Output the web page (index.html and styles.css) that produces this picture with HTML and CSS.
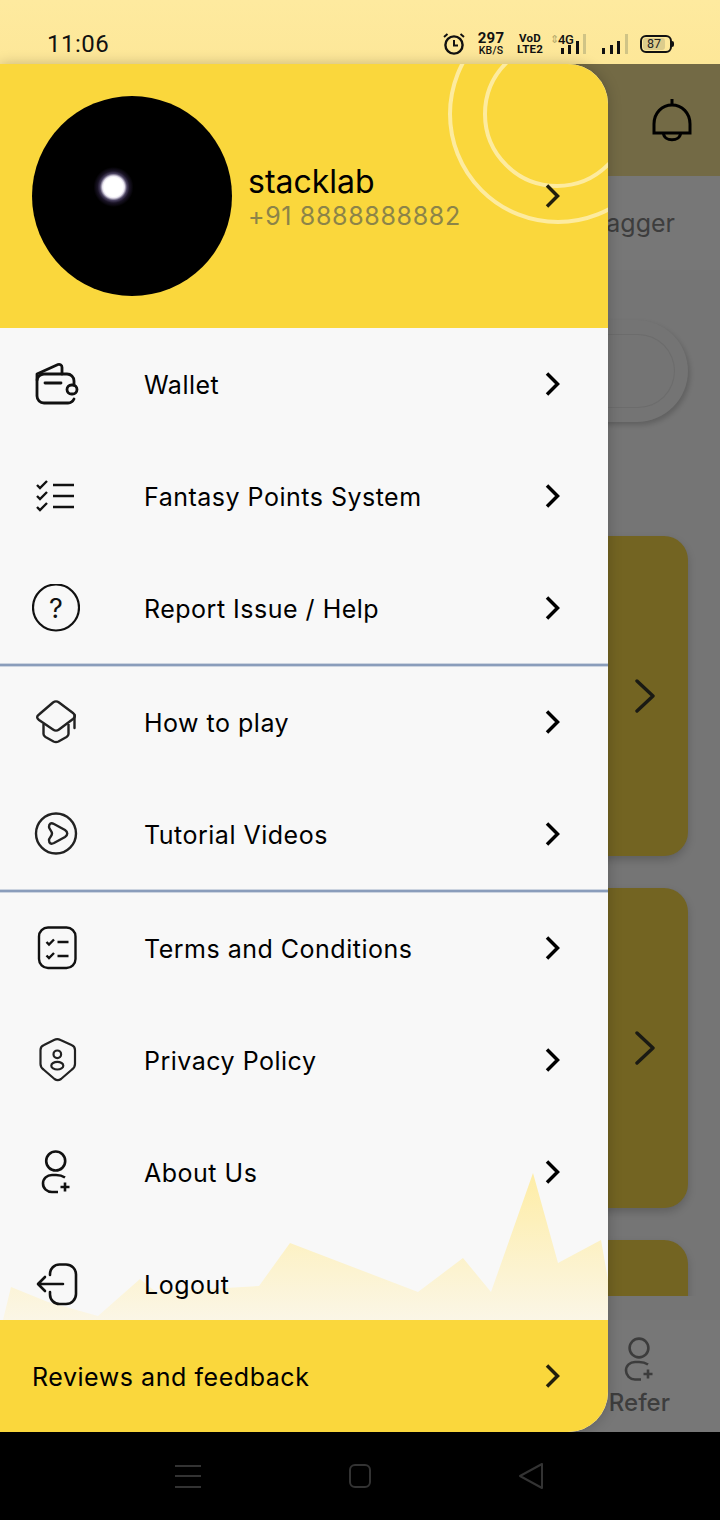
FILE: index.html
```html
<!DOCTYPE html>
<html lang="en">
<head>
    <meta charset="UTF-8">
    <meta name="viewport" content="width=device-width, initial-scale=1.0">
    <title>Drawer Menu</title>
    <link rel="stylesheet" href="styles.css">
</head>
<body>
<div class="screen">

    <div class="status-bar">
        <span class="clock">11:06</span>
        <div class="status-icons">
            <svg class="alarm" width="24" height="24" viewBox="0 0 24 24" fill="none" stroke="#111" stroke-width="2.4">
                <circle cx="12" cy="13" r="8.6"/>
                <path d="M12 8v5.5h4" stroke-width="2"/>
                <path d="M2 5l3.5-3M22 5l-3.5-3" stroke-width="2"/>
            </svg>
            <div class="speed"><b>297</b><span>KB/S</span></div>
            <div class="volte"><b>VoD</b><b>LTE2</b></div>
            <div class="net">
                <span class="net-arrows">⇕</span>
                <span class="net-type">4G</span>
                <svg width="30" height="20" viewBox="0 0 30 20" fill="#111">
                    <rect x="1" y="14" width="3" height="6"/>
                    <rect x="8" y="11" width="3" height="9"/>
                    <rect x="16" y="7" width="3" height="13"/>
                    <rect x="23" y="0" width="3" height="20" fill="#d0c486"/>
                </svg>
            </div>
            <svg class="signal" width="28" height="20" viewBox="0 0 28 20" fill="#111">
                <rect x="1" y="14" width="3" height="6"/>
                <rect x="9" y="11" width="3" height="9"/>
                <rect x="16" y="7" width="3" height="13"/>
                <rect x="24" y="0" width="3" height="20" fill="#d0c486"/>
            </svg>
            <div class="battery"><span class="battery-level">87</span></div>
        </div>
    </div>

    <!-- page behind the drawer -->
    <div class="page">
        <div class="top-bar">
            <svg width="48" height="48" viewBox="0 0 48 48" fill="none" stroke="#000" stroke-width="3">
                <path d="M24 3v6"/>
                <path d="M6 37V28C6 17 14 9 24 9s18 8 18 19v9z"/>
                <path d="M15.5 37c0 9 17 9 17 0"/>
            </svg>
        </div>
        <div class="tabs"><span>agger</span></div>
        <div class="content">
            <div class="pill"><div class="pill-inner"></div></div>
            <div class="card">
                <svg width="20" height="34" viewBox="0 0 20 34" fill="none" stroke="#1a1a14" stroke-width="3.4" stroke-linecap="round" stroke-linejoin="round"><path d="M2 2l16 15L2 32"/></svg>
            </div>
            <div class="card">
                <svg width="20" height="34" viewBox="0 0 20 34" fill="none" stroke="#1a1a14" stroke-width="3.4" stroke-linecap="round" stroke-linejoin="round"><path d="M2 2l16 15L2 32"/></svg>
            </div>
            <div class="card"></div>
        </div>
        <div class="bottom-bar">
            <div class="refer">
                <svg width="48" height="46" viewBox="0 0 48 46" fill="none" stroke="#3c3c3c" stroke-width="2.6">
                    <circle cx="24" cy="12" r="9.4"/>
                    <path d="M33 28.5c-3-2-5-2.500-9-2.500h-4c-5 0-9 3.500-9 8.500s4 9 9 9h6"/>
                    <path d="M33 33.500v9M28.500 38h9"/>
                </svg>
                <span>Refer</span>
            </div>
        </div>
    </div>

    <div class="nav-bar">
        <svg width="26" height="24" viewBox="0 0 26 24" stroke="#333" stroke-width="2"><path d="M0 2h26M0 12h26M0 23h26"/></svg>
        <svg width="22" height="24" viewBox="0 0 22 24" fill="none" stroke="#333" stroke-width="2"><rect x="1" y="1" width="20" height="22" rx="5"/></svg>
        <svg width="24" height="26" viewBox="0 0 24 26" fill="none" stroke="#333" stroke-width="2" stroke-linejoin="round"><path d="M23 1v24L1 13z"/></svg>
    </div>

    <!-- drawer -->
    <aside class="drawer">
        <div class="profile">
            <div class="ring ring-outer"></div>
            <div class="ring ring-inner"></div>
            <div class="avatar"></div>
            <div class="profile-info">
                <div class="profile-name">stacklab</div>
                <div class="profile-phone">+91 8888888882</div>
            </div>
            <svg class="chevron" width="18" height="26" viewBox="0 0 18 26" fill="none" stroke="#221f0c" stroke-width="3.5"><path d="M3 2.500L13.500 13 3 23.500"/></svg>
        </div>

        <div class="menu">
            <svg class="menu-bg" width="608" height="160" viewBox="0 0 608 160">
                <defs>
                    <linearGradient id="chartFill" x1="0" y1="0" x2="0" y2="1">
                        <stop offset="0" stop-color="#feeda6"/>
                        <stop offset="1" stop-color="#fbf6e6"/>
                    </linearGradient>
                </defs>
                <path fill="url(#chartFill)" d="M3 160L11 127L48 142L98 156L140 119L156 132L259 126L290 83L418 132L463 98L491 132L533 13L558 103L601 80L608 120V160z"/>
            </svg>

            <a class="row">
                <svg class="icon" width="48" height="48" viewBox="0 0 48 48" fill="none" stroke="#111" stroke-width="2.800" stroke-linecap="round" stroke-linejoin="round">
                    <path d="M42 25v-4a7 7 0 0 0-7-7H12a7 7 0 0 0-7 7v15a7 7 0 0 0 7 7h24a7 7 0 0 0 6-4"/>
                    <path d="M5 20v-6l21-9.500c2-.5 4 .5 4 3V14"/>
                    <path d="M13 23h16"/>
                    <rect x="35" y="25" width="10" height="9" rx="4.500"/>
                </svg>
                <span>Wallet</span>
                <svg class="chevron" width="18" height="26" viewBox="0 0 18 26" fill="none" stroke="#000" stroke-width="3.5"><path d="M3 2.500L13.500 13 3 23.500"/></svg>
            </a>
            <a class="row">
                <svg class="icon" width="48" height="48" viewBox="0 0 48 48" fill="none" stroke="#111" stroke-width="2.400">
                    <path d="M5 13l3 3 7-7M5 24l3 3 7-7M5 35l3 3 7-7"/>
                    <path d="M21 13h21M21 24h21M21 35h21"/>
                </svg>
                <span>Fantasy Points System</span>
                <svg class="chevron" width="18" height="26" viewBox="0 0 18 26" fill="none" stroke="#000" stroke-width="3.5"><path d="M3 2.500L13.500 13 3 23.500"/></svg>
            </a>
            <a class="row">
                <svg class="icon" width="48" height="48" viewBox="0 0 48 48" fill="none" stroke="#111" stroke-width="2.200">
                    <circle cx="24" cy="23.500" r="23"/>
                    <text class="icon-mark" x="24" y="33.500" text-anchor="middle" fill="#111" stroke="none">?</text>
                </svg>
                <span>Report Issue / Help</span>
                <svg class="chevron" width="18" height="26" viewBox="0 0 18 26" fill="none" stroke="#000" stroke-width="3.5"><path d="M3 2.500L13.500 13 3 23.500"/></svg>
            </a>

            <div class="divider"></div>

            <a class="row">
                <svg class="icon" width="48" height="48" viewBox="0 0 48 48" fill="none" stroke="#222" stroke-width="2.400" stroke-linejoin="round">
                    <path d="M21 4.500c2-1.500 4-1.500 6 0L41 15c2.500 2 2.500 4 0 6L27 31.500c-2 1.500-4 1.500-6 0L7 22c-2.500-2-2.500-3.500 0-5.500z"/>
                    <path d="M11.500 26v10c0 1.500.5 2 2 3l8 4.500c1.500.7 3.500.7 5 0l8-4.500c1.500-1 2-1.500 2-3V26"/>
                    <path d="M42.500 17v13" stroke-linecap="round"/>
                </svg>
                <span>How to play</span>
                <svg class="chevron" width="18" height="26" viewBox="0 0 18 26" fill="none" stroke="#000" stroke-width="3.5"><path d="M3 2.500L13.500 13 3 23.500"/></svg>
            </a>
            <a class="row">
                <svg class="icon" width="48" height="48" viewBox="0 0 48 48" fill="none" stroke="#222" stroke-width="2.400">
                    <circle cx="24" cy="23.500" r="20"/>
                    <path d="M17 17c0-3.500 2-4.500 5-3l11 6c3 2 3 5 0 7l-11 6c-3 1.500-5 .5-5-3 0-2 3-4 3-6.500S17 19 17 17z"/>
                </svg>
                <span>Tutorial Videos</span>
                <svg class="chevron" width="18" height="26" viewBox="0 0 18 26" fill="none" stroke="#000" stroke-width="3.5"><path d="M3 2.500L13.500 13 3 23.500"/></svg>
            </a>

            <div class="divider"></div>

            <a class="row">
                <svg class="icon" width="48" height="48" viewBox="0 0 48 48" fill="none" stroke="#111" stroke-width="2.400">
                    <rect x="7" y="3.500" width="36.500" height="40.500" rx="9"/>
                    <path d="M14.500 18l2.500 2.500 5-5M14.500 31.500l2.500 2.500 5-5"/>
                    <path d="M25.500 18h11M25.500 32h11"/>
                </svg>
                <span>Terms and Conditions</span>
                <svg class="chevron" width="18" height="26" viewBox="0 0 18 26" fill="none" stroke="#000" stroke-width="3.5"><path d="M3 2.500L13.500 13 3 23.500"/></svg>
            </a>
            <a class="row">
                <svg class="icon" width="48" height="48" viewBox="0 0 48 48" fill="none" stroke="#222" stroke-width="2.200" stroke-linejoin="round">
                    <path d="M22 4c2-1 4.500-1 6.500 0l11 5c2.500 1 3.500 2.500 3.500 5v14c0 2.500-1 4-3 5.500l-11 9.500c-2 1.500-4.500 1.500-6.500 0l-11-9.500c-2-1.500-3-3-3-5.500V14c0-2.500 1-4 3.500-5z"/>
                    <circle cx="25.300" cy="18.300" r="3.800"/>
                    <ellipse cx="25.300" cy="29.700" rx="6" ry="3.800"/>
                </svg>
                <span>Privacy Policy</span>
                <svg class="chevron" width="18" height="26" viewBox="0 0 18 26" fill="none" stroke="#000" stroke-width="3.5"><path d="M3 2.500L13.500 13 3 23.500"/></svg>
            </a>
            <a class="row">
                <svg class="icon" width="48" height="48" viewBox="0 0 48 48" fill="none" stroke="#111" stroke-width="2.600">
                    <circle cx="23.700" cy="13" r="9.500"/>
                    <path d="M33 29.500c-3-2-5-2.500-9-2.500h-4c-5 0-9 3.500-9 8.500s4 8.500 9 8.500h6"/>
                    <path d="M33 34.500v9M28.500 39h9"/>
                </svg>
                <span>About Us</span>
                <svg class="chevron" width="18" height="26" viewBox="0 0 18 26" fill="none" stroke="#000" stroke-width="3.5"><path d="M3 2.500L13.500 13 3 23.500"/></svg>
            </a>
            <a class="row">
                <svg class="icon" width="48" height="48" viewBox="0 0 48 48" fill="none" stroke="#111" stroke-width="2.600" stroke-linecap="round" stroke-linejoin="round">
                    <path d="M18 15v-1a9.500 9.500 0 0 1 9.500-9.500H34A10 10 0 0 1 44 14.500V34a10 10 0 0 1-10 10h-6.500A9.500 9.500 0 0 1 18 34.500V32"/>
                    <path d="M31 24H7M13 17l-7 7 7 7"/>
                </svg>
                <span>Logout</span>
            </a>
        </div>

        <a class="feedback">
            <span>Reviews and feedback</span>
            <svg class="chevron" width="18" height="26" viewBox="0 0 18 26" fill="none" stroke="#221f0c" stroke-width="3.5"><path d="M3 2.500L13.500 13 3 23.500"/></svg>
        </a>
    </aside>

</div>
</body>
</html>
```

FILE: styles.css
```css
* {
    box-sizing: border-box;
}
body {
    margin: 0;
    background-color: #000;
    font-family: 'Inter', sans-serif;
    color: #000;
}
.screen {
    position: relative;
    width: 720px;
    height: 1520px;
    overflow: hidden;
    display: flex;
    flex-direction: column;
}

/* status bar */
.status-bar {
    height: 64px;
    flex-shrink: 0;
    background: linear-gradient(#feea9f, #fde798);
    display: flex;
    align-items: flex-end;
    justify-content: space-between;
    padding: 0 48px 8px 47px;
    color: #111;
    font-family: 'Roboto', sans-serif;
}
.clock {
    font-size: 24px;
    line-height: 24px;
    letter-spacing: 0.5px;
}
.status-icons {
    display: flex;
    align-items: center;
    height: 24px;
}
.alarm {
    margin-right: 11px;
}
.speed {
    display: flex;
    flex-direction: column;
    align-items: center;
    width: 28px;
    margin-right: 12px;
}
.speed b {
    font-size: 15px;
    line-height: 13px;
    letter-spacing: 0.3px;
}
.speed span {
    font-size: 10.500px;
    line-height: 11px;
    font-weight: 500;
    letter-spacing: 0.2px;
}
.volte {
    display: flex;
    flex-direction: column;
    width: 26px;
    margin-right: 10px;
    align-items: center;
}
.volte b {
    font-size: 11.500px;
    line-height: 11px;
    letter-spacing: 0.2px;
}
.net {
    position: relative;
    display: flex;
    align-items: flex-end;
    width: 36px;
    height: 20px;
    justify-content: flex-end;
    margin-right: 12px;
}
.net-arrows {
    position: absolute;
    left: -3px;
    top: -1px;
    font-size: 11px;
    color: #b5a96c;
}
.net-type {
    position: absolute;
    left: 5px;
    top: 0;
    font-size: 13px;
    line-height: 12px;
    font-weight: 500;
    letter-spacing: -0.3px;
}
.net svg {
    margin-right: -1px;
}
.signal {
    margin-right: 11px;
}
.battery {
    position: relative;
    width: 32px;
    height: 18px;
    border: 2px solid #111;
    border-radius: 6px;
    padding: 1px;
    display: flex;
}
.battery::after {
    content: "";
    position: absolute;
    right: -4px;
    top: 4px;
    width: 2px;
    height: 6px;
    background-color: #111;
    border-radius: 0 2px 2px 0;
}
.battery-level {
    width: 85%;
    background-color: #dccc8c;
    border-radius: 3px;
    font-size: 12.500px;
    line-height: 12px;
    text-align: center;
    color: #222;
}

/* page behind the drawer */
.page {
    flex: 1;
    min-height: 0;
    display: flex;
    flex-direction: column;
    background-color: #757575;
}
.top-bar {
    height: 112px;
    flex-shrink: 0;
    background-color: #736a45;
    display: flex;
    justify-content: flex-end;
    align-items: center;
    padding: 0 24px 0 0;
}
.tabs {
    height: 94px;
    flex-shrink: 0;
    background-color: #777777;
    display: flex;
    justify-content: flex-end;
    align-items: center;
    padding-right: 45px;
    font-size: 25px;
    color: #3d3d3d;
}
.content {
    flex: 1;
    min-height: 0;
    margin-bottom: 24px;
    overflow: hidden;
    padding: 50px 32px 0;
    display: flex;
    flex-direction: column;
    gap: 32px;
}
.pill {
    height: 102px;
    flex-shrink: 0;
    margin-bottom: 82px;
    padding: 14px 13px 14px 0;
    border-radius: 51px;
    background-color: #747474;
    box-shadow: 2px 3px 5px rgba(0, 0, 0, 0.18);
}
.pill-inner {
    height: 100%;
    border-radius: 37px;
    background-color: #747474;
    border: 1px solid #6c6c6c;
    border-left: none;
}
.card {
    height: 320px;
    flex-shrink: 0;
    border-radius: 24px;
    background-color: #736422;
    box-shadow: 0 4px 8px rgba(0, 0, 0, 0.18);
    display: flex;
    align-items: center;
    justify-content: flex-end;
    padding-right: 33px;
}
.bottom-bar {
    height: 112px;
    flex-shrink: 0;
    background-color: #777777;
    display: flex;
    justify-content: flex-end;
    padding-right: 50px;
}
.refer {
    display: flex;
    flex-direction: column;
    align-items: center;
    padding-top: 16px;
    font-size: 24px;
    line-height: 30px;
    font-weight: 500;
    color: #3d3d3d;
}
.refer span {
    margin-top: 6px;
}
.nav-bar {
    height: 88px;
    flex-shrink: 0;
    background-color: #000;
    display: flex;
    justify-content: center;
    align-items: center;
    gap: 148px;
    padding-right: 3px;
}

/* drawer */
.drawer {
    position: absolute;
    left: 0;
    top: 64px;
    width: 608px;
    height: 1368px;
    overflow: hidden;
    border-radius: 0 40px 40px 0;
    background-color: #f8f8f8;
    display: flex;
    flex-direction: column;
    box-shadow: 0 0 14px rgba(0, 0, 0, 0.22);
}
.profile {
    position: relative;
    height: 264px;
    flex-shrink: 0;
    overflow: hidden;
    background-color: #fad73c;
    display: flex;
    align-items: center;
    padding: 0 46px 0 32px;
    gap: 16px;
}
.ring {
    position: absolute;
    border: 4px solid #fdeb9f;
    border-radius: 50%;
}
.ring-outer {
    left: 448px;
    top: -60px;
    width: 220px;
    height: 220px;
}
.ring-inner {
    left: 483px;
    top: -24px;
    width: 148px;
    height: 148px;
}
.avatar {
    width: 200px;
    height: 200px;
    flex-shrink: 0;
    border-radius: 50%;
    background: radial-gradient(circle at 81.5px 91px, #fff 0, #fff 9.5px, #e6e2ee 11px, #4a4260 13.5px, #1a1426 16px, #000 20px);
}
.profile-info {
    position: relative;
    flex: 1;
    padding-top: 4px;
}
.profile-name {
    font-size: 32px;
    line-height: 36px;
    margin-top: -1px;
}
.profile-phone {
    font-size: 25px;
    line-height: 32px;
    letter-spacing: 0.65px;
    color: #8c8448;
}
.chevron {
    position: relative;
    flex-shrink: 0;
    margin-left: auto;
}
.menu {
    position: relative;
    flex: 1;
    min-height: 0;
    overflow: hidden;
}
.menu-bg {
    position: absolute;
    left: 0;
    bottom: 0;
}
.row {
    position: relative;
    height: 112px;
    display: flex;
    align-items: center;
    padding: 0 46px 0 32px;
    gap: 64px;
    font-size: 25px;
    letter-spacing: 0.5px;
}
.row span,
.feedback span {
    margin-top: 2px;
}
.icon {
    flex-shrink: 0;
}
.icon-mark {
    font-family: 'Inter', sans-serif;
    font-size: 27px;
    font-weight: 400;
    letter-spacing: 0;
}
.divider {
    position: relative;
    height: 2px;
    background-color: #8a9dbb;
    box-shadow: 0 0 0 1px #ccd4e0;
}
.feedback {
    height: 112px;
    flex-shrink: 0;
    background-color: #fad73c;
    display: flex;
    align-items: center;
    padding: 0 46px 0 32px;
    font-size: 25px;
    letter-spacing: 0.55px;
}
```
